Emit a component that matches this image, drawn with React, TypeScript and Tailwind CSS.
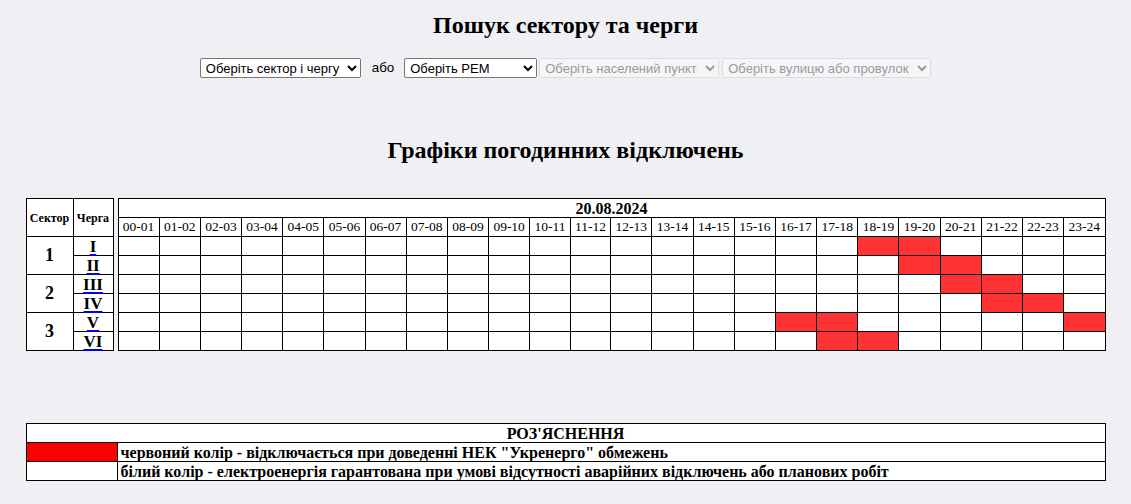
import React from "react";

const hours = Array.from({ length: 24 }, (_, i) => {
  const a = String(i).padStart(2, "0");
  const b = String(i + 1).padStart(2, "0");
  return `${a}-${b}`;
});

// hours that are switched off, per queue
const offHours: number[][] = [
  [18, 19],
  [19, 20],
  [20, 21],
  [21, 22],
  [16, 17, 23],
  [17, 18],
];

const queues = ["I", "II", "III", "IV", "V", "VI"];

const Select = ({
  label,
  width,
  disabled,
}: {
  label: string;
  width: string;
  disabled?: boolean;
}) => (
  <select
    disabled={disabled}
    className={
      disabled
        ? `${width} h-[20px] border border-[#dcdcdc] bg-[#f5f5f8] text-[#9a9a9a] text-[13px] rounded-[2px] pl-[1px]`
        : `${width} h-[20px] border border-[#767676] bg-white text-black text-[13px] rounded-[2px] pl-[1px]`
    }
    style={{ fontFamily: "'Liberation Sans', Arial, sans-serif" }}
  >
    <option>{label}</option>
  </select>
);

export default function App() {
  return (
    <div
      className="min-h-[504px] bg-[#efeff4] text-black"
      style={{ fontFamily: "'Liberation Serif', 'Times New Roman', serif" }}
    >
      <h2 className="pt-[11px] text-center text-[24px] font-bold leading-[28px]">
        Пошук сектору та черги
      </h2>

      <div className="mt-[19px] flex items-center justify-center">
        <Select label="Оберіть сектор і чергу" width="w-[161px]" />
        <span
          className="ml-[11px] mr-[10px] text-[13.33px]"
          style={{ fontFamily: "'Liberation Sans', Arial, sans-serif" }}
        >
          або
        </span>
        <Select label="Оберіть РЕМ" width="w-[133px]" />
        <div className="ml-[2px] flex">
          <Select label="Оберіть населений пункт" width="w-[180px]" disabled />
        </div>
        <div className="ml-[3px] flex">
          <Select label="Оберіть вулицю або провулок" width="w-[209px]" disabled />
        </div>
      </div>

      <h2 className="mt-[58px] text-center text-[24px] font-bold leading-[28px]">
        Графіки погодинних відключень
      </h2>

      <div className="mx-auto mt-[34px] flex w-[1080px] items-start gap-[4px]">
        <table className="w-[88px] border-collapse border border-black bg-white">
          <tbody>
            <tr className="h-[38px]">
              <th className="w-[47px] border border-black p-0 text-[12px] font-bold">
                Сектор
              </th>
              <th className="border border-black p-0 text-[12px] font-bold">
                Черга
              </th>
            </tr>
            {queues.map((q, i) => (
              <tr key={q} className="h-[19px]">
                {i % 2 === 0 && (
                  <td
                    rowSpan={2}
                    className="border border-black p-0 text-center text-[18px] font-bold"
                  >
                    {i / 2 + 1}
                  </td>
                )}
                <td className="border border-black p-0 text-center text-[17px] font-bold leading-[17px]">
                  <a
                    href="#"
                    className="text-black underline decoration-[#0000ee] decoration-[2px] underline-offset-[2px]"
                  >
                    {q}
                  </a>
                </td>
              </tr>
            ))}
          </tbody>
        </table>

        <table className="flex-1 table-fixed border-collapse border border-black bg-white">
          <tbody>
            <tr className="h-[19px]">
              <th
                colSpan={24}
                className="border border-black p-0 text-[16px] font-bold leading-[17px]"
              >
                20.08.2024
              </th>
            </tr>
            <tr className="h-[19px]">
              {hours.map((h) => (
                <td
                  key={h}
                  className="border border-black p-0 text-center text-[13.5px] leading-[16px]"
                >
                  {h}
                </td>
              ))}
            </tr>
            {offHours.map((row, r) => (
              <tr key={r} className="h-[19px]">
                {hours.map((h, c) => (
                  <td
                    key={h}
                    className={
                      row.includes(c)
                        ? "border border-black bg-[#ff3333] p-0"
                        : "border border-black p-0"
                    }
                  />
                ))}
              </tr>
            ))}
          </tbody>
        </table>
      </div>

      <table className="mx-auto mt-[72px] w-[1080px] border-collapse border border-black bg-white">
        <tbody>
          <tr className="h-[19px]">
            <th
              colSpan={2}
              className="border border-black p-0 text-[16px] font-bold leading-[17px]"
            >
              РОЗ&apos;ЯСНЕННЯ
            </th>
          </tr>
          <tr className="h-[19px]">
            <td className="w-[91px] border border-black bg-[#ff0000] p-0" />
            <td className="border border-black px-[3px] py-0 text-[16px] font-bold leading-[17px]">
              червоний колір - відключається при доведенні НЕК "Укренерго" обмежень
            </td>
          </tr>
          <tr className="h-[19px]">
            <td className="border border-black p-0" />
            <td className="border border-black px-[3px] py-0 text-[16px] font-bold leading-[17px]">
              білий колір - електроенергія гарантована при умові відсутності аварійних відключень або планових робіт
            </td>
          </tr>
        </tbody>
      </table>
    </div>
  );
}
